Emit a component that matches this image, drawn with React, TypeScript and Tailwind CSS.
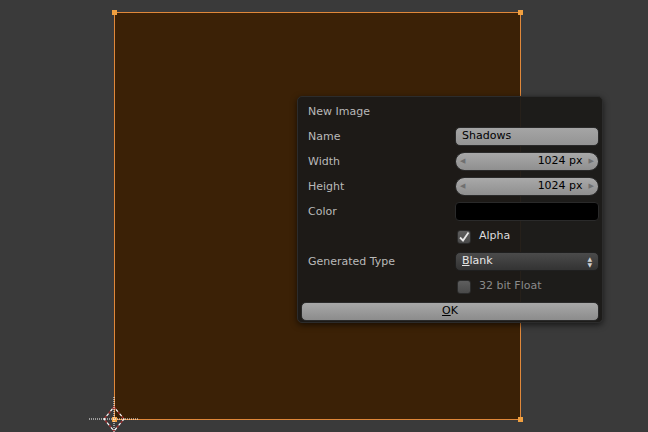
import React from 'react';

const font = { fontFamily: '"DejaVu Sans", "Liberation Sans", sans-serif' };

const Row: React.FC<{ label?: string; children?: React.ReactNode }> = ({ label, children }) => (
  <div className="grid grid-cols-[154px_144px] h-[19px] items-center">
    <span className="pl-[7px] text-[11px] text-[#b9b9b9] leading-none">{label}</span>
    <div className="h-full">{children}</div>
  </div>
);

const NumField: React.FC<{ value: string }> = ({ value }) => (
  <div className="h-full rounded-full bg-gradient-to-b from-[#a9a9a9] to-[#8f8f8f] border border-[#2a2a2a] flex items-center justify-between px-[4px] text-[11px] text-black">
    <span className="text-[7px] text-[#707070]">◀</span>
    <span className="ml-auto mr-[6px]">{value}</span>
    <span className="text-[7px] text-[#707070]">▶</span>
  </div>
);

const Check: React.FC<{ checked?: boolean; label: string; dim?: boolean }> = ({ checked, label, dim }) => (
  <div className="h-full flex items-center gap-[8px] pl-[2px]">
    <div className="w-[14px] h-[14px] rounded-[3px] bg-gradient-to-b from-[#5e5e5e] to-[#4a4a4a] border border-[#2b2b2b] flex items-center justify-center">
      {checked && (
        <svg width="12" height="12" viewBox="0 0 12 12">
          <path d="M2 6.5 L5 9.5 L10.5 1.5" stroke="#e8e8e8" strokeWidth="1.8" fill="none" />
        </svg>
      )}
    </div>
    <span className={`text-[11px] ${dim ? 'text-[#8a8a8a]' : 'text-[#dcdcdc]'}`}>{label}</span>
  </div>
);

const Cursor3D = () => (
  <svg width="54" height="44" viewBox="0 0 54 44" className="absolute left-[87px] top-[397px]">
    <path d="M27 10 L37 22 L27 34 L17 22 Z" fill="none" stroke="#b03030" strokeWidth="1.5" strokeDasharray="3 3" opacity="0.8" />
    <path d="M27 10 L37 22 L27 34 L17 22 Z" fill="none" stroke="#ffffff" strokeWidth="1.2" strokeDasharray="3 3" strokeDashoffset="3" />
    <line x1="2" y1="22" x2="52" y2="22" stroke="#ffffff" strokeWidth="1" strokeDasharray="1 1" />
    <line x1="27" y1="0" x2="27" y2="44" stroke="#ffffff" strokeWidth="1" strokeDasharray="1 1" />
  </svg>
);

export default function App() {
  return (
    <div className="relative w-[648px] h-[432px] overflow-hidden bg-[#3a3a3a]" style={font}>
      {/* image canvas */}
      <div className="absolute left-[114px] top-[12px] w-[407px] h-[408px] bg-[#3b2106] border border-[#e0883a]" />
      {[
        'left-[112px] top-[10px]',
        'left-[518px] top-[10px]',
        'left-[518px] top-[417px]',
        'left-[112px] top-[417px]',
      ].map((c) => (
        <div key={c} className={`absolute ${c} w-[5px] h-[5px] bg-[#f0a040]`} />
      ))}
      <Cursor3D />

      {/* New Image popup */}
      <div className="absolute left-[297px] top-[96px] w-[306px] h-[227px] rounded-[5px] bg-[#1b1a18]/95 border border-[#2c2c2c] shadow-[0_2px_6px_rgba(0,0,0,0.6)] px-[3px] pt-[5px] flex flex-col gap-[6px]">
        <Row label="New Image" />
        <Row label="Name">
          <div className="h-full rounded-[5px] bg-gradient-to-b from-[#a5a5a5] to-[#949494] border border-[#2a2a2a] flex items-center px-[6px] text-[11px] text-black">
            Shadows
          </div>
        </Row>
        <Row label="Width">
          <NumField value="1024 px" />
        </Row>
        <Row label="Height">
          <NumField value="1024 px" />
        </Row>
        <Row label="Color">
          <div className="h-full rounded-[4px] bg-black border border-[#2a2a2a]" />
        </Row>
        <Row>
          <Check checked label="Alpha" />
        </Row>
        <Row label="Generated Type">
          <div className="h-full rounded-[5px] bg-gradient-to-b from-[#4b4b4b] to-[#333333] border border-[#1f1f1f] flex items-center justify-between px-[6px] text-[11px] text-[#e6e6e6]">
            <span>
              <span className="underline">B</span>lank
            </span>
            <span className="flex flex-col text-[6px] leading-[6px] text-[#cfcfcf]">
              <span>▲</span>
              <span>▼</span>
            </span>
          </div>
        </Row>
        <Row>
          <Check label="32 bit Float" dim />
        </Row>
        <div className="h-[19px] rounded-[5px] bg-gradient-to-b from-[#a8a8a8] to-[#8c8c8c] border border-[#2a2a2a] flex items-center justify-center text-[11px] text-black">
          <span>
            <span className="underline">O</span>K
          </span>
        </div>
      </div>
    </div>
  );
}
